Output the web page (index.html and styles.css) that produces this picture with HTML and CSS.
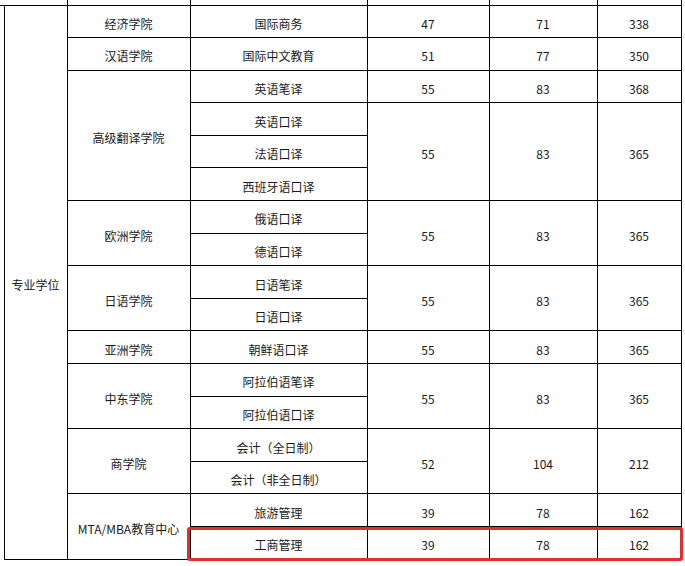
FILE: index.html
```html
<!DOCTYPE html>
<html lang="zh-CN">
<head>
<meta charset="utf-8">
<link rel="stylesheet" href="styles.css">
</head>
<body>
<div class="wrap">
<table class="t">
<colgroup>
<col class="w0"><col class="w1"><col class="w2"><col class="w3"><col class="w4"><col class="w5"><col class="w6">
</colgroup>
<tr class="strip"><td class="c0"></td><td class="s1"></td><td></td><td></td><td></td><td></td><td></td></tr>
<tr><td class="c0" rowspan="17"></td><td class="deg" rowspan="17">专业学位</td><td>经济学院</td><td>国际商务</td><td>47</td><td>71</td><td>338</td></tr>
<tr><td>汉语学院</td><td>国际中文教育</td><td>51</td><td>77</td><td>350</td></tr>
<tr><td rowspan="4">高级翻译学院</td><td>英语笔译</td><td>55</td><td>83</td><td>368</td></tr>
<tr><td>英语口译</td><td rowspan="3">55</td><td rowspan="3">83</td><td rowspan="3">365</td></tr>
<tr><td>法语口译</td></tr>
<tr><td>西班牙语口译</td></tr>
<tr><td rowspan="2">欧洲学院</td><td>俄语口译</td><td rowspan="2">55</td><td rowspan="2">83</td><td rowspan="2">365</td></tr>
<tr><td>德语口译</td></tr>
<tr><td rowspan="2">日语学院</td><td>日语笔译</td><td rowspan="2">55</td><td rowspan="2">83</td><td rowspan="2">365</td></tr>
<tr><td>日语口译</td></tr>
<tr><td>亚洲学院</td><td>朝鲜语口译</td><td>55</td><td>83</td><td>365</td></tr>
<tr><td rowspan="2">中东学院</td><td>阿拉伯语笔译</td><td rowspan="2">55</td><td rowspan="2">83</td><td rowspan="2">365</td></tr>
<tr><td>阿拉伯语口译</td></tr>
<tr><td rowspan="2">商学院</td><td>会计（全日制）</td><td rowspan="2">52</td><td rowspan="2">104</td><td rowspan="2">212</td></tr>
<tr><td>会计（非全日制）</td></tr>
<tr><td rowspan="2">MTA/MBA教育中心</td><td>旅游管理</td><td>39</td><td>78</td><td>162</td></tr>
<tr><td>工商管理</td><td>39</td><td>78</td><td>162</td></tr>
</table>
<div class="hl"></div>
</div>
</body>
</html>
```
FILE: styles.css
```css
html, body {
  margin: 0;
  padding: 0;
  background: #fff;
}
.wrap {
  position: relative;
  width: 685px;
  height: 566px;
  overflow: hidden;
}
.t {
  border-collapse: collapse;
  table-layout: fixed;
  width: 681px;
  font-family: "Noto Sans CJK SC", "Noto Sans", sans-serif;
  font-size: 12px;
  color: #1a1a1a;
}
.w0 { width: 4px; }
.w1 { width: 63px; }
.w2 { width: 123px; }
.w3 { width: 177px; }
.w4 { width: 122px; }
.w5 { width: 108px; }
.w6 { width: 84px; }
.t td {
  border: 1px solid #000;
  height: 32.6px;
  padding: 5px 0 0 0;
  box-sizing: border-box;
  text-align: center;
  vertical-align: middle;
  white-space: nowrap;
  line-height: 16px;
}
.t .strip td {
  height: 5px;
  padding: 0;
  border-top: none;
}
.t .strip .c0 {
  border: none;
}
.t .strip .s1 {
  border-left: none;
}
.t td.c0 {
  border: none;
  border-top: 1px solid #000;
}
.hl {
  position: absolute;
  left: 187px;
  top: 527px;
  width: 496px;
  height: 34px;
  box-sizing: border-box;
  border: 3px solid #e0302c;
  border-radius: 3px;
  box-shadow: 0 0 1px rgba(220, 40, 40, 0.6);
}
```
